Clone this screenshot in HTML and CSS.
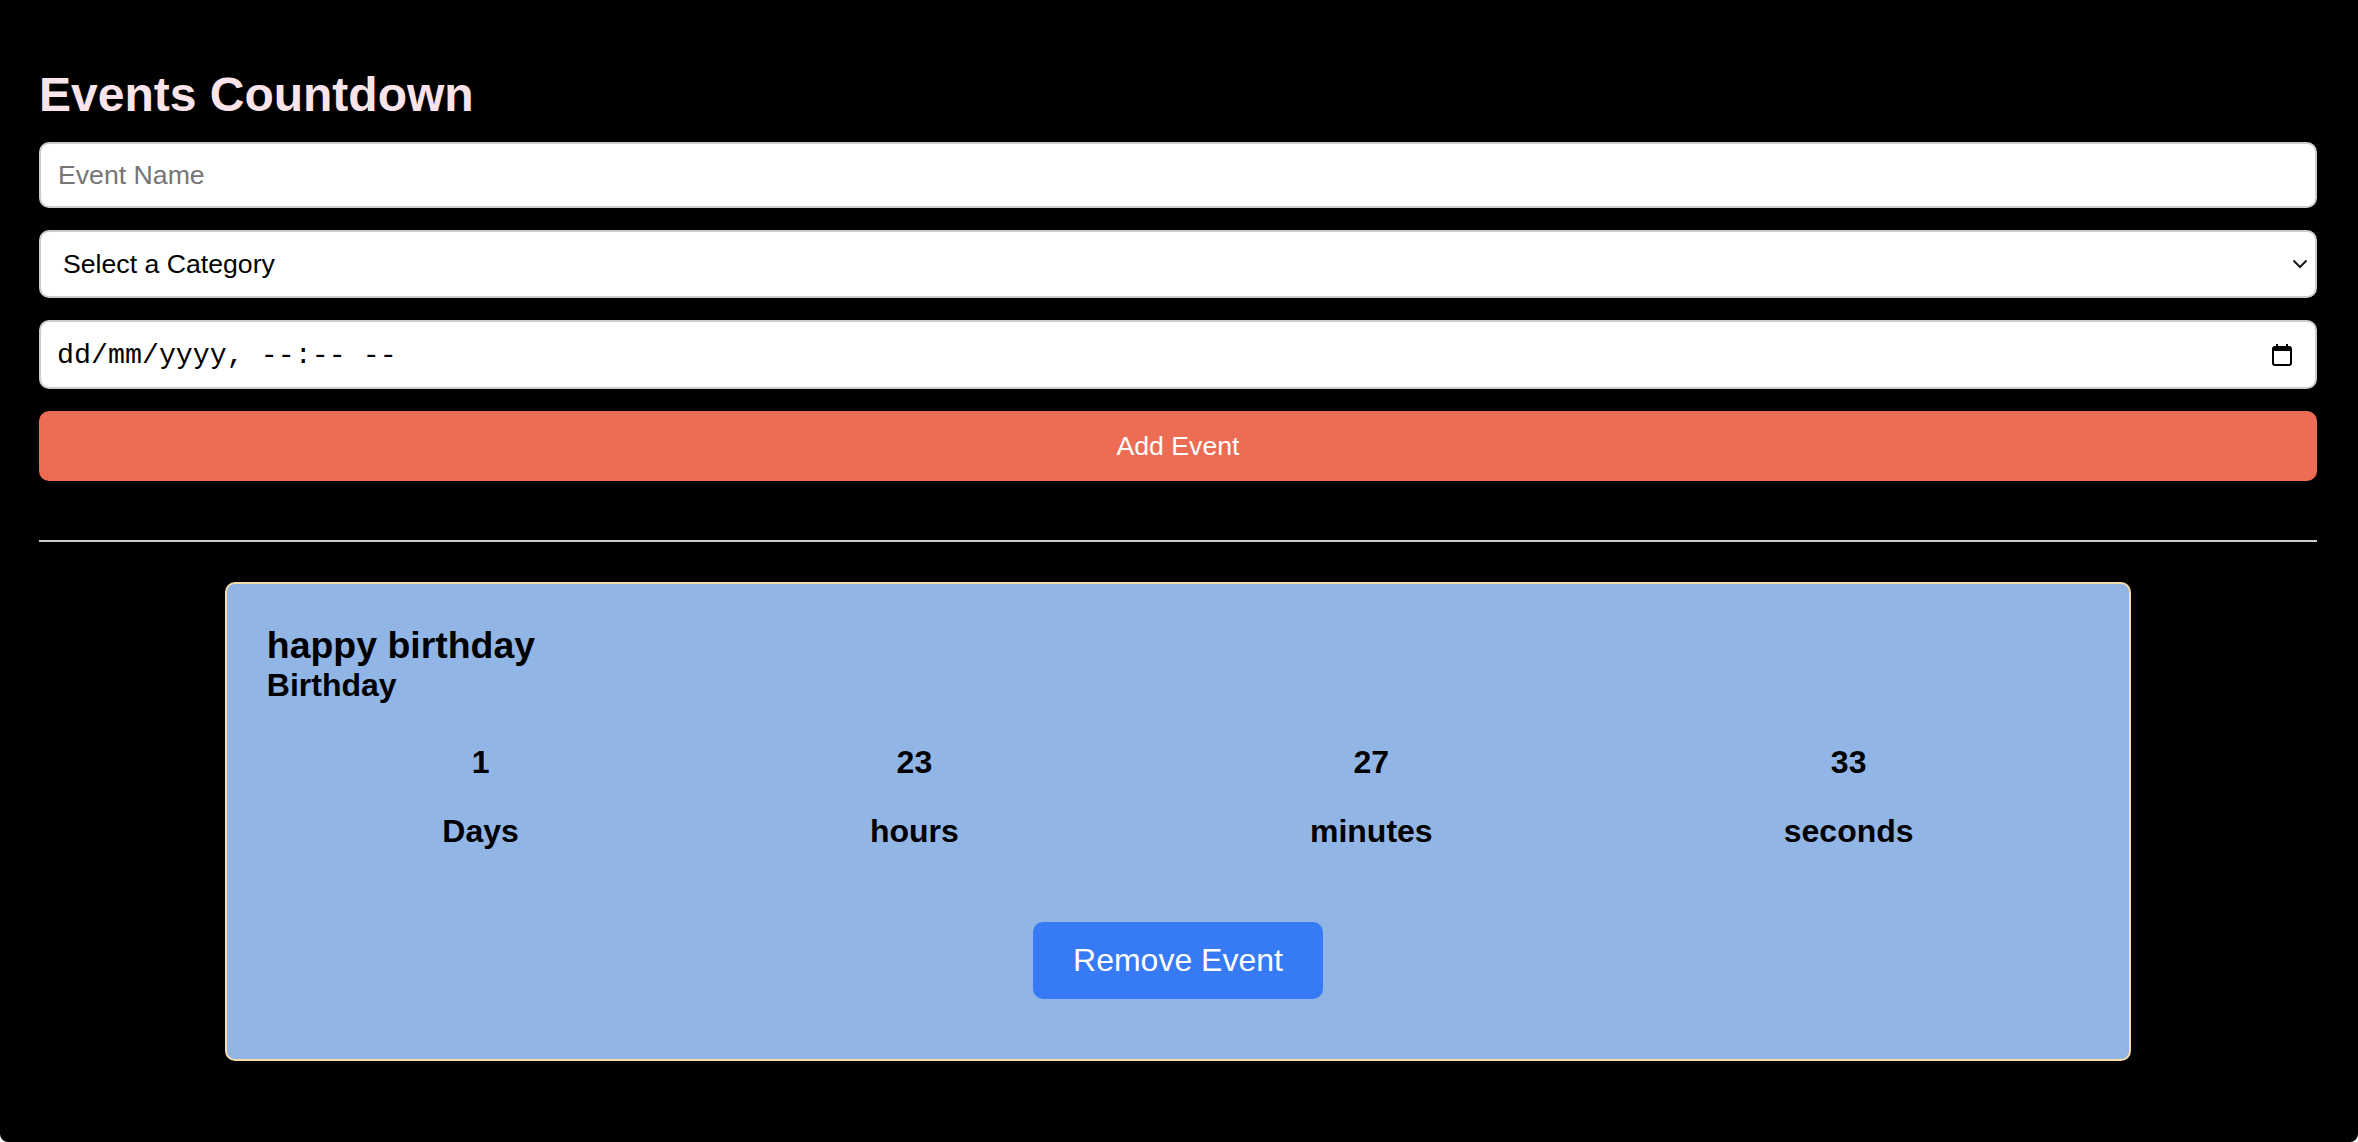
FILE: index.html
```html
<!DOCTYPE html>
<html lang="en">
<head>
<meta charset="utf-8">
<title>Events Countdown</title>
<link rel="stylesheet" href="styles.css">
</head>
<body>
<main class="app">
  <h1 class="title">Events Countdown</h1>
  <form class="event-form">
    <input class="field text-field" type="text" placeholder="Event Name">
    <div class="select-wrap">
      <select class="field select-field">
        <option>Select a Category</option>
        <option>Birthday</option>
      </select>
      <svg class="chevron" viewBox="0 0 16 10" aria-hidden="true"><path d="M1.5 1.5 L8 8 L14.5 1.5" fill="none" stroke="#1a1a1a" stroke-width="2"/></svg>
    </div>
    <div class="field date-field">
      <span class="date-text">dd/mm/yyyy, --:-- --</span>
      <svg class="calendar" viewBox="0 0 20 22" aria-hidden="true">
        <rect x="4" y="0" width="2" height="4" fill="#000"/>
        <rect x="14" y="0" width="2" height="4" fill="#000"/>
        <rect x="1" y="3" width="18" height="18" rx="2" fill="none" stroke="#000" stroke-width="2"/>
        <rect x="1" y="3" width="18" height="4" fill="#000"/>
      </svg>
    </div>
    <button type="button" class="add-btn">Add Event</button>
  </form>
  <hr class="divider">
  <section class="event-card">
    <h3 class="event-name">happy birthday</h3>
    <h4 class="event-category">Birthday</h4>
    <div class="countdown">
      <div class="unit"><p class="value">1</p><p class="label">Days</p></div>
      <div class="unit"><p class="value">23</p><p class="label">hours</p></div>
      <div class="unit"><p class="value">27</p><p class="label">minutes</p></div>
      <div class="unit"><p class="value">33</p><p class="label">seconds</p></div>
    </div>
    <div class="actions"><button type="button" class="remove-btn">Remove Event</button></div>
  </section>
</main>
</body>
</html>
```

FILE: styles.css
```css
html {
  background: #fff;
}

body {
  margin: 0;
  min-height: 100vh;
  background: #000;
  border-radius: 0 0 8px 8px;
  font-family: "Liberation Sans", Arial, sans-serif;
}

.app {
  padding: 29px 41px 40px 39px;
}

.title {
  margin: 38px 0 20px;
  font-size: 48px;
  font-weight: bold;
  line-height: normal;
  color: #fbe4e9;
}

.event-form {
  display: flex;
  flex-direction: column;
  gap: 22px;
}

.field {
  box-sizing: border-box;
  width: 100%;
  margin: 0;
  border: 2px solid #cccccc;
  border-radius: 10px;
  background: #fff;
  font-family: "Liberation Sans", Arial, sans-serif;
  font-size: 26.67px;
  color: #000;
}

.text-field {
  height: 66px;
  padding: 0 17px;
  outline: none;
}

.text-field::placeholder {
  color: #757575;
}

.select-wrap {
  position: relative;
}

.select-field {
  display: block;
  height: 68px;
  padding: 0 40px 0 22px;
  appearance: none;
  -webkit-appearance: none;
  outline: none;
}

.chevron {
  position: absolute;
  right: 9px;
  top: 29px;
  width: 16px;
  height: 10px;
  pointer-events: none;
}

.date-field {
  height: 69px;
  display: flex;
  align-items: center;
  justify-content: space-between;
  padding: 0 23px 0 16px;
}

.date-text {
  font-family: "Liberation Mono", "Courier New", monospace;
  font-size: 28.3px;
  color: #000;
}

.calendar {
  width: 20px;
  height: 22px;
  flex: none;
}

.add-btn {
  height: 70px;
  border: none;
  border-radius: 10px;
  background: #ec6d53;
  color: #fff;
  font-family: "Liberation Sans", Arial, sans-serif;
  font-size: 26.67px;
  cursor: pointer;
}

.divider {
  margin: 59px 0 40px;
  height: 2px;
  border: none;
  background: #cccccc;
}

.event-card {
  width: 80%;
  margin: 0 auto;
  padding: 40px;
  border: 2px solid #f3dcae;
  border-radius: 10px;
  background: #91b5e5;
  color: #000;
}

.event-name {
  margin: 0;
  font-size: 37.44px;
  font-weight: bold;
  line-height: normal;
}

.event-category {
  margin: 0 0 40px;
  font-size: 32px;
  font-weight: bold;
  line-height: normal;
}

.countdown {
  display: flex;
  justify-content: space-around;
  text-align: center;
}

.value,
.label {
  margin: 0;
  font-size: 32px;
  font-weight: bold;
  line-height: normal;
}

.value {
  margin-bottom: 32px;
}

.actions {
  margin: 72px 0 20px;
  text-align: center;
}

.remove-btn {
  padding: 20px 40px;
  border: none;
  border-radius: 10px;
  background: #377af6;
  color: #fff;
  font-family: "Liberation Sans", Arial, sans-serif;
  font-size: 32px;
  line-height: normal;
  cursor: pointer;
}
```
